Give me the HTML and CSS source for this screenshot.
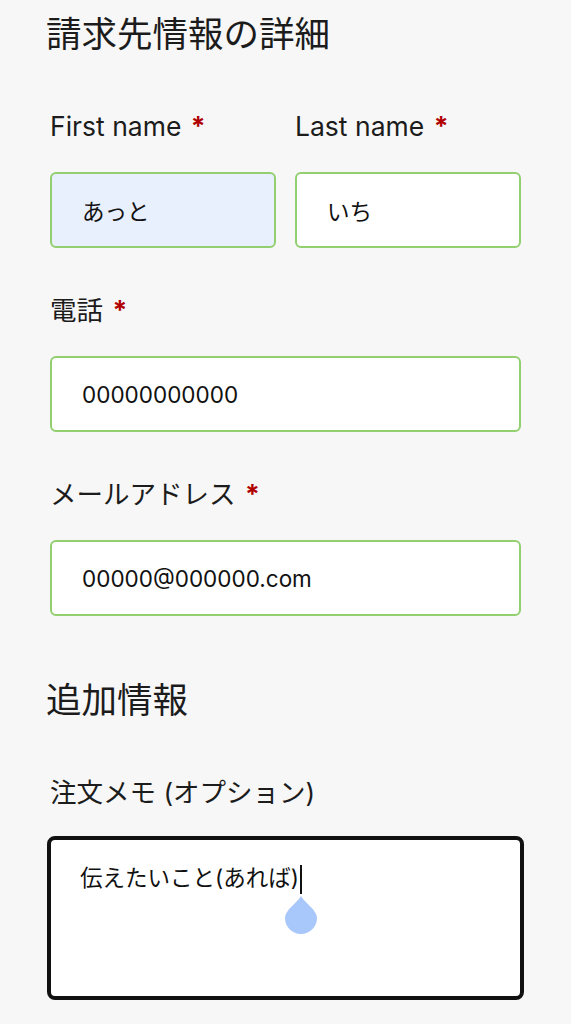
FILE: index.html
```html
<!DOCTYPE html>
<html lang="ja">
<head>
  <meta charset="UTF-8" />
  <title>請求先情報の詳細</title>
  <link rel="stylesheet" href="styles.css">
</head>
<body>

<div class="form">
  <h2>請求先情報の詳細</h2>

  <div class="row">
    <div class="field">
      <label>First name <span class="req">*</span></label>
      <input class="autofill" type="text" value="あっと">
    </div>
    <div class="field">
      <label>Last name <span class="req">*</span></label>
      <input type="text" value="いち">
    </div>
  </div>

  <div class="field">
    <label>電話 <span class="req">*</span></label>
    <input type="tel" value="00000000000">
  </div>

  <div class="field">
    <label>メールアドレス <span class="req">*</span></label>
    <input type="email" value="00000@000000.com">
  </div>

  <h2 class="sub">追加情報</h2>

  <div class="field">
    <label>注文メモ (オプション)</label>
    <div class="memo">伝えたいこと(あれば)<span class="caret"><svg class="handle" width="34" height="40" viewBox="0 0 34 40"><path d="M17 1 C21 8 33 15 33 23 A16 16 0 0 1 1 23 C1 15 13 8 17 1 Z" fill="#a8c7fa"/></svg></span></div>
  </div>
</div>

</body>
</html>
```

FILE: styles.css
```css
body {
  background-color: #f7f7f7;
  color: #1c1c1c;
  font-family: Inter, "Noto Sans CJK JP", sans-serif;
  margin: 0;
  padding: 11px 0 0;
}
.form {
  padding: 0 50px;
  width: 471px;
}
h2 {
  font-size: 35.5px;
  font-weight: 400;
  line-height: 48px;
  margin: 0 0 50px -4px;
}
h2.sub {
  margin-top: 61px;
  margin-bottom: 50px;
}
.row {
  display: flex;
  gap: 19px;
}
.row .field {
  flex: 1;
}
.field {
  margin-bottom: 45px;
}
label {
  display: block;
  font-size: 26.5px;
  line-height: 34px;
  margin-bottom: 29px;
}
.req {
  color: #b10000;
  font-weight: 700;
  margin-left: 2px;
}
input {
  display: block;
  width: 100%;
  height: 76px;
  box-sizing: border-box;
  border: 2px solid #92cf70;
  border-radius: 6px;
  background-color: #fff;
  padding: 0 30px;
  font-family: Inter, "Noto Sans CJK JP", sans-serif;
  font-size: 22.5px;
  color: #111;
  outline: none;
}
input.autofill {
  background-color: #e8f0fe;
}
.memo {
  position: relative;
  height: 164px;
  box-sizing: border-box;
  margin: -2px -3px 0;
  border: 4px solid #111;
  border-radius: 8px;
  background-color: #fff;
  padding: 21px 29px;
  font-size: 22.5px;
  line-height: 34px;
  color: #111;
}
.caret {
  position: relative;
  display: inline-block;
  width: 2px;
  height: 29px;
  margin-left: 1px;
  background-color: #111;
  vertical-align: -8px;
}
.handle {
  position: absolute;
  left: -16px;
  top: 30px;
}
```
